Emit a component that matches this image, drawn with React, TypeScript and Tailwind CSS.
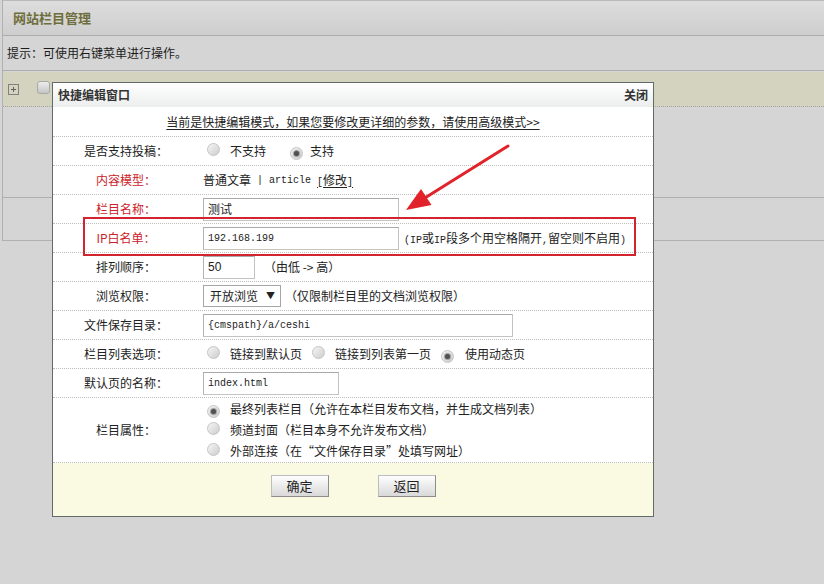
import React from "react";

const mono = "font-['Liberation_Mono',monospace] text-[10px]";

function Radio({ checked }: { checked?: boolean }) {
  return (
    <span className="inline-flex shrink-0 w-[13px] h-[13px] rounded-full border border-[#c4c4c4] bg-gradient-to-br from-[#f6f6f6] to-[#cdcdcd] items-center justify-center">
      {checked && <span className="w-[5px] h-[5px] rounded-full bg-[#505050] shadow-[0_0_1px_1px_#9a9a9a]" />}
    </span>
  );
}

function Input({ w, children }: { w: string; children?: React.ReactNode }) {
  return (
    <div
      className={`${w} h-[23px] shrink-0 border border-[#c3c3c3] border-t-[#a9a9a9] border-l-[#b3b3b3] bg-white flex items-center pl-[4px] text-[#222]`}
    >
      {children}
    </div>
  );
}

function Row({
  label,
  red,
  h = "h-[29px]",
  children,
}: {
  label: React.ReactNode;
  red?: boolean;
  h?: string;
  children?: React.ReactNode;
}) {
  return (
    <div className={`${h} grid grid-cols-[146px_1fr] border-b border-dotted border-[#bdbdbd]`}>
      <div className={`flex items-center justify-center ${red ? "text-[#cc2229]" : "text-[#222]"}`}>{label}</div>
      <div className="flex items-center pl-[4px]">{children}</div>
    </div>
  );
}

function Btn({ children }: { children: React.ReactNode }) {
  return (
    <div className="w-[58px] h-[22px] border border-[#bdbdbd] border-r-[#8c8c8c] border-b-[#8c8c8c] bg-gradient-to-b from-[#fefefe] to-[#d9d9d9] flex items-center justify-center text-[13px] text-[#222]">
      {children}
    </div>
  );
}

export default function App() {
  return (
    <div className="relative w-[824px] h-[584px] overflow-hidden bg-[#d5d5d5] font-['Noto_Sans_CJK_SC',sans-serif] text-[12px] text-[#222]">
      {/* background page */}
      <div className="ml-[2px] h-[241px] border-l border-b border-[#b0b0b0] flex flex-col">
        <div className="h-[36px] border-t border-b border-t-[#b9b9b9] border-b-[#acacac] bg-gradient-to-b from-[#dddddd] to-[#cecece] flex items-center pl-[10px]">
          <span className="font-bold text-[13px] text-[#6e6e3c]">网站栏目管理</span>
        </div>
        <div className="h-[35px] border-b border-[#adadad] flex items-center pl-[4px] text-[#1c1c1c]">
          提示：可使用右键菜单进行操作。
        </div>
        <div className="mt-[1px] h-[35px] bg-[#d3d3c0] border-b border-dotted border-[#a3a3a3] flex items-center">
          <svg width="11" height="11" viewBox="0 0 11 11" className="ml-[5px]">
            <rect x="0.5" y="0.5" width="10" height="10" fill="none" stroke="#808080" />
            <path d="M3 5.5h5M5.5 3v5" stroke="#606060" />
          </svg>
          <span className="ml-[18px] w-[13px] h-[13px] rounded-[3px] border border-[#a9a9a9] bg-gradient-to-b from-[#ececec] to-[#c6c6c6] -mt-[3px]" />
        </div>
        <div className="h-[91px] border-b border-[#b0b0b0]" />
        <div className="flex-1" />
      </div>

      {/* dialog */}
      <div className="absolute left-[52px] top-[82px] w-[602px] border border-[#626a6a] bg-white flex flex-col">
        <div className="h-[24px] bg-gradient-to-b from-white to-[#eceeee] flex items-center justify-between pl-[5px] pr-[5px] font-bold text-[#333]">
          <span>快捷编辑窗口</span>
          <span>关闭</span>
        </div>
        <div className="h-[30px] border-b border-dotted border-[#bdbdbd] flex items-center justify-center">
          <span className="underline underline-offset-2">当前是快捷编辑模式，如果您要修改更详细的参数，请使用高级模式&gt;&gt;</span>
        </div>

        <Row label="是否支持投稿：">
          <span className="ml-[4px]"><Radio /></span>
          <span className="ml-[10px]">不支持</span>
          <span className="ml-[24px]"><Radio checked /></span>
          <span className="ml-[7px]">支持</span>
        </Row>
        <Row label="内容模型：" red>
          <span>普通文章</span>
          <span className={`${mono} whitespace-pre`}> | article </span>
          <span className="underline underline-offset-2">
            <span className={mono}>[</span>修改<span className={mono}>]</span>
          </span>
        </Row>
        <Row label="栏目名称：" red>
          <Input w="w-[196px]">测试</Input>
        </Row>
        <Row label="IP白名单：" red>
          <Input w="w-[196px]">
            <span className={mono}>192.168.199</span>
          </Input>
          <span className="ml-[5px] whitespace-pre">
            <span className={mono}>(IP</span>或<span className={mono}>IP</span>段多个用空格隔开<span className={mono}>,</span>留空则不启用<span className={mono}>)</span>
          </span>
        </Row>
        <Row label="排列顺序：">
          <Input w="w-[52px]">
            <span className="font-['Liberation_Sans',sans-serif]">50</span>
          </Input>
          <span className="ml-[9px]">（由低 -&gt; 高）</span>
        </Row>
        <Row label="浏览权限：">
          <div className="w-[78px] h-[22px] border border-[#a6a6a6] bg-white flex items-center justify-between pl-[6px] pr-[5px]">
            <span>开放浏览</span>
            <span className="text-[9px]">▼</span>
          </div>
          <span className="ml-[4px]">（仅限制栏目里的文档浏览权限）</span>
        </Row>
        <Row label="文件保存目录：">
          <Input w="w-[310px]">
            <span className={mono}>{"{cmspath}/a/ceshi"}</span>
          </Input>
        </Row>
        <Row label="栏目列表选项：">
          <span className="ml-[4px]"><Radio /></span>
          <span className="ml-[10px]">链接到默认页</span>
          <span className="ml-[10px]"><Radio /></span>
          <span className="ml-[10px]">链接到列表第一页</span>
          <span className="ml-[10px]"><Radio checked /></span>
          <span className="ml-[11px]">使用动态页</span>
        </Row>
        <Row label="默认页的名称：">
          <Input w="w-[136px]">
            <span className={mono}>index.html</span>
          </Input>
        </Row>
        <Row label="栏目属性：" h="h-[65px]">
          <div className="flex flex-col">
            <div className="h-[21px] flex items-center">
              <span className="ml-[4px]"><Radio checked /></span>
              <span className="ml-[10px]">最终列表栏目（允许在本栏目发布文档，并生成文档列表）</span>
            </div>
            <div className="h-[21px] flex items-center">
              <span className="ml-[4px]"><Radio /></span>
              <span className="ml-[10px]">频道封面（栏目本身不允许发布文档）</span>
            </div>
            <div className="h-[21px] flex items-center">
              <span className="ml-[4px]"><Radio /></span>
              <span className="ml-[10px]">外部连接（在“文件保存目录”处填写网址）</span>
            </div>
          </div>
        </Row>
        <div className="h-[53px] bg-[#fafae3] flex justify-center items-start gap-[49px] pt-[12px]">
          <Btn>确定</Btn>
          <Btn>返回</Btn>
        </div>
      </div>

      {/* annotation: red box */}
      <div className="absolute left-[83px] top-[217px] w-[553px] h-[39px] border-[2px] border-[#d3232c]" />

      {/* annotation: arrow */}
      <svg className="absolute left-0 top-0 pointer-events-none" width="824" height="584">
        <line x1="508" y1="146" x2="424" y2="198.5" stroke="#e1222a" strokeWidth="3" strokeLinecap="round" />
        <polygon points="406,210 431.5,205 421,189" fill="#e1222a" />
      </svg>
    </div>
  );
}
